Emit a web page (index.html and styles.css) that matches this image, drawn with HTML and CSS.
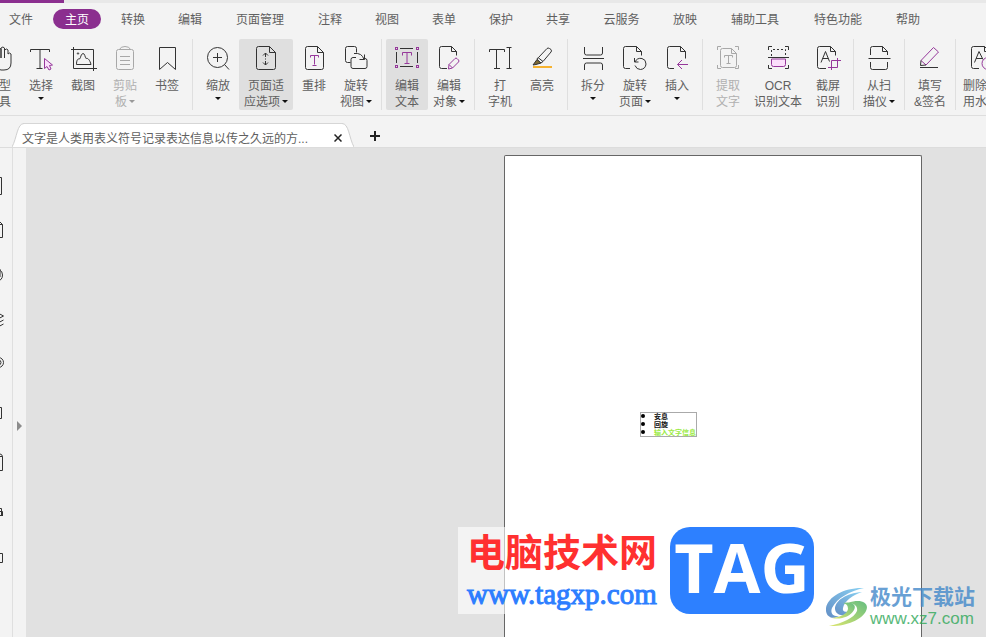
FILE: index.html
```html
<!DOCTYPE html>
<html lang="zh-CN">
<head>
<meta charset="utf-8">
<meta name="viewport" content="width=device-width, initial-scale=1">
<title>PDF 编辑器</title>
<link rel="stylesheet" href="styles.css">
</head>
<body>
<div class="app">
  <header class="top">
    <div class="strip"></div>
    <nav class="menu">
      <button class="file">文件</button>
      <button class="current">主页</button>
      <div class="menu-items">
        <button>转换</button>
        <button>编辑</button>
        <button class="long">页面管理</button>
        <button>注释</button>
        <button>视图</button>
        <button>表单</button>
        <button>保护</button>
        <button>共享</button>
        <button class="mid">云服务</button>
        <button>放映</button>
        <button class="long">辅助工具</button>
        <button class="long">特色功能</button>
        <button>帮助</button>
      </div>
    </nav>

    <div class="ribbon">
      <button class="tool">
        <svg viewBox="0 0 28 28"><path d="M9 13V7q2.500-2 3.500 0v7V5q2-2 3.500 0v9V4q2-2 3.500 0v10V6q2.500-2 3.500 0v4q1.500-2 3 0v9q0 7-7 7h-3q-3 0-5-4l-4-7q1-2 3-1z"/></svg>
        <span>手型<br>工具</span>
      </button>
      <button class="tool">
        <svg viewBox="0 0 28 28"><path d="M3.500 8V5.500h19V8M13 5.500v19M9.500 24.500h6"/><path class="p pink" d="M17.500 14.500v10l2.500-2 2 3.500 2-1-1.500-3.500 3-.5z"/></svg>
        <span>选择<i class="caret below"></i></span>
      </button>
      <button class="tool">
        <svg viewBox="0 0 28 28"><path d="M4.500 3v21.500H28M2 5.500h22.500V27M7.500 20.500c0-4 1-6 3-5.500 1.500-1 1-5 3.500-5.500 2 0 2 4 3 5 2-1 4 2 5 6z"/><circle cx="9" cy="9.500" r=".7"/></svg>
        <span>截图</span>
      </button>
      <button class="tool" disabled>
        <svg viewBox="0 0 28 28"><rect x="5.500" y="5.500" width="17" height="20" rx="2"/><path d="M8.500 5.500q1-3 5.500-3t5.500 3M9 12.500h10M9 16.500h10M9 20.500h10"/></svg>
        <span>剪贴<br>板<i class="caret"></i></span>
      </button>
      <button class="tool">
        <svg viewBox="0 0 28 28"><path d="M6.500 3.500h16v22l-8-7-8 7z"/></svg>
        <span>书签</span>
      </button>
      <hr>
      <button class="tool">
        <svg viewBox="0 0 28 28"><circle cx="13.500" cy="13.500" r="10"/><path d="M20.500 20.500l4.500 5M9 13.500h9M13.500 9v9"/></svg>
        <span>缩放<i class="caret below"></i></span>
      </button>
      <button class="tool active wide">
        <svg viewBox="0 0 28 28"><path d="M17.500 2.500h-11q-2 0-2 2v19q0 2 2 2h15q2 0 2-2v-15zv6h6M13.500 9v4M13.500 17v4M11 11.500l2.500-2.500 2.500 2.500M11 18.500l2.500 2.500 2.500-2.500M13.500 14.500v1"/></svg>
        <span>页面适<br>应选项<i class="caret"></i></span>
      </button>
      <button class="tool">
        <svg viewBox="0 0 28 28"><path d="M17.500 2.500h-10q-2 0-2 2v19q0 2 2 2h14q2 0 2-2v-15zv6h6"/><path class="p" d="M10.500 13.500v-2h8v2M14.500 11.500v9M12.500 21.500h4"/></svg>
        <span>重排</span>
      </button>
      <button class="tool">
        <svg viewBox="0 0 28 28"><path d="M8.500 18.500h-3q-2 0-2-2v-12q0-2 2-2h7q2 0 2 2v4M14 13.500h-3q-2 0-2 2v7q0 2 2 2h12q2 0 2-2v-6q0-2-2-2M12 9.500q8-1 10 6M22.500 10.500v5h-5"/></svg>
        <span>旋转<br>视图<i class="caret"></i></span>
      </button>
      <hr>
      <button class="tool active">
        <svg viewBox="0 0 28 28"><path d="M7 4.500h13M7 22.500h13M3.500 8v11M24.500 8v11"/><g class="p"><path d="M9.500 11.500v-3h9v3M14 8.500v11M11.500 19.500h5"/><rect x="2.500" y="3.500" width="2" height="2"/><rect x="23.500" y="3.500" width="2" height="2"/><rect x="2.500" y="21.500" width="2" height="2"/><rect x="23.500" y="21.500" width="2" height="2"/></g></svg>
        <span>编辑<br>文本</span>
      </button>
      <button class="tool">
        <svg viewBox="0 0 28 28"><path d="M12 24.500H6.500q-2 0-2-2v-18q0-2 2-2h10l5 5v4M16.500 2.500v5h5"/><path class="p" d="M14 20.500l6-6q1-1 2 0l1.500 1.500q1 1 0 2l-6 6-4 1zM14 20.500l3.500 3.500"/></svg>
        <span>编辑<br>对象<i class="caret"></i></span>
      </button>
      <hr>
      <button class="tool">
        <svg viewBox="0 0 28 28"><path d="M3.500 8V5.500h15V8M10.500 5.500v19M8 24.500h6M20.500 3.500h5M23.500 3.500v21M20.500 24.500h5"/></svg>
        <span>打<br>字机</span>
      </button>
      <button class="tool">
        <svg viewBox="0 0 28 28"><path d="M10.500 13.500l8.500-9q1-1 2.500 0l1.500 1q1 1.500 0 2.500l-8 9.500M10 13.500l5 4-2 1.500q-2-.5-4-4z"/><path class="nib" d="M9 15.500l4 3.500-5 1.500-3 .5z"/><path class="orange" d="M5 23h19"/></svg>
        <span>高亮</span>
      </button>
      <hr>
      <button class="tool">
        <svg viewBox="0 0 28 28"><path d="M5.500 3v6q0 2 2 2h14q2 0 2-2V3M4 14.500h21M5.500 26v-5q0-2 2-2h14q2 0 2 2v5"/></svg>
        <span>拆分<i class="caret below"></i></span>
      </button>
      <button class="tool">
        <svg viewBox="0 0 28 28"><path d="M9 24.500H4.500q-2 0-2-2v-18q0-2 2-2h11l5 5v4M15.500 2.500v5h5M13.500 14v4h4M14 18q2-4.500 7-3.500 4 1 4 5.500-.5 5-5.500 5.500-4 0-5.500-4"/></svg>
        <span>旋转<br>页面<i class="caret"></i></span>
      </button>
      <button class="tool">
        <svg viewBox="0 0 28 28"><path d="M11 24.500H6.500q-2 0-2-2v-18q0-2 2-2h11l5 5v7M17.500 2.500v5h5"/><path class="p" d="M25 20.500H14.500M19 16l-4.500 4.500L19 25"/></svg>
        <span>插入<i class="caret below"></i></span>
      </button>
      <hr>
      <button class="tool" disabled>
        <svg viewBox="0 0 28 28"><path d="M3.500 6V2.500H7M21 2.500h3.500V6M3.500 21v3.500H7M21 24.500h3.500V21M17.500 4.500h-9q-2 0-2 2v15q0 2 2 2h12q2 0 2-2v-12zv5h5M10.500 13.500v-2h8v2M14.500 11.500v8M12.500 19.500h4"/></svg>
        <span>提取<br>文字</span>
      </button>
      <button class="tool ocr">
        <svg viewBox="0 0 28 28"><path d="M4.500 6V2.500H8M21 2.500h3.500V6M4.500 21v3.500H8M21 24.500h3.500V21"/><path stroke-dasharray="2 2" d="M7.500 12V5.500h14V12"/><path class="p pink" d="M7.500 15v5.500q0 2 2 2h10q2 0 2-2V15z"/><path d="M4 13.500h21"/></svg>
        <span>OCR<br>识别文本</span>
      </button>
      <button class="tool">
        <svg viewBox="0 0 28 28"><path d="M12 24.500H5.500q-2 0-2-2v-18q0-2 2-2h11l5 5v4M16.500 2.500v5h5M7 18.500l4.500-11 4 10M8.500 14.500h6"/><path class="p" d="M14 23.500h9.500V14M17.500 26v-9.500H27"/></svg>
        <span>截屏<br>识别</span>
      </button>
      <hr>
      <button class="tool">
        <svg viewBox="0 0 28 28"><path d="M5.500 11V4.500q0-2 2-2h10l5 5V11M17.500 2.500v5h5M3.500 14.500h22M5.500 18v5.500q0 2 2 2h13q2 0 2-2V18"/></svg>
        <span>从扫<br>描仪<i class="caret"></i></span>
      </button>
      <hr>
      <button class="tool">
        <svg viewBox="0 0 28 28"><path class="p" d="M5 16.500L17.500 3.500l5 4.500-12.500 13z"/><path d="M5 16.500l-.5 5 5.500-.5M4 23.500h18"/></svg>
        <span>填写<br>&amp;签名</span>
      </button>
      <hr>
      <button class="tool">
        <svg viewBox="0 0 28 28"><path d="M12 24.500H6.500q-2 0-2-2v-18q0-2 2-2h11l5 5v5M17.500 2.500v5h5M7.500 18.500l4.500-11 4 8M9 14.500h6"/><circle class="p" cx="21" cy="19.500" r="6"/></svg>
        <span>删除试<br>用水印</span>
      </button>
    </div>
  </header>

  <div class="tabs">
    <div class="tab">
      <svg class="edge" viewBox="0 0 12 24"><path d="M0 24C5 15 5 .5 12 .5V24z"/><path class="line" d="M0 24C5 15 5 .5 12 .5"/></svg>
      <a href="#doc">文字是人类用表义符号记录表达信息以传之久远的方...</a>
      <button class="close" aria-label="关闭"><svg viewBox="0 0 8 8"><path d="M.5.5l7 7M7.500.5l-7 7"/></svg></button>
      <svg class="edge flip" viewBox="0 0 12 24"><path d="M0 24C5 15 5 .5 12 .5V24z"/><path class="line" d="M0 24C5 15 5 .5 12 .5"/></svg>
    </div>
    <button class="add" aria-label="新建标签"><svg viewBox="0 0 10 10"><path d="M0 5h10M5 0v10"/></svg></button>
  </div>

  <main class="work">
    <aside class="rail">
      <button aria-label="缩略图"><svg viewBox="0 0 24 24"><path d="M6 3.500h15.500v17H6z"/></svg></button>
      <button aria-label="书签"><svg viewBox="0 0 24 24"><path d="M6 6.500h16.500v13H6zM18 6l2-2 2.500 2.500"/></svg></button>
      <button aria-label="附件"><svg viewBox="0 0 24 24"><path d="M10 8v6q0 5 6 5 6.500 0 6.500-6 0-4-3-5M20 7v8"/></svg></button>
      <button aria-label="图层"><svg viewBox="0 0 24 24"><path d="M16 6l7.500 4-7.500 4-8-4zM23.500 14l-7.500 4-8-4M23.500 18l-7.500 4-8-4"/></svg></button>
      <button aria-label="标记"><svg viewBox="0 0 24 24"><circle cx="18.500" cy="12.500" r="5"/><circle cx="18.500" cy="12.500" r="2.500"/></svg></button>
      <button class="second" aria-label="字段"><svg viewBox="0 0 24 24"><path d="M6 6.500h15.500v11H6z"/></svg></button>
      <button class="lower" aria-label="剪贴板"><svg viewBox="0 0 24 24"><path d="M6 7.500h16.500v14H6zM18 7q0-2 2-2t2.500 2.500"/></svg></button>
      <button class="lower" aria-label="安全"><svg viewBox="0 0 24 24"><path d="M17 11.500h4.500v7H17M22.500 19v-4.500H19M17 18.500h5.500M19.500 4v3"/></svg></button>
      <button class="lower" aria-label="签名"><svg viewBox="0 0 24 24"><path d="M6 8.500h16.500v9H6z"/></svg></button>
    </aside>
    <button class="expand" aria-label="展开面板"></button>
    <section class="canvas">
      <article class="page" id="doc">
        <ul class="textbox">
          <li>安息</li>
          <li>回旋</li>
          <li class="green">输入文字信息</li>
        </ul>
      </article>
    </section>
  </main>

  <div class="banner">
    <div class="banner-text">
      <strong>电脑技术网</strong>
      <span>www.tagxp.com</span>
    </div>
    <div class="tag">TAG</div>
  </div>

  <div class="stamp">
    <svg viewBox="0 0 42 40">
      <defs>
        <linearGradient id="blue" x1="1" y1="0" x2="0" y2="1"><stop offset="0" stop-color="#6dc6f0"/><stop offset="1" stop-color="#3d74b8"/></linearGradient>
        <linearGradient id="green" x1="1" y1="0" x2="0" y2="1"><stop offset="0" stop-color="#3fae62"/><stop offset="1" stop-color="#d5e04a"/></linearGradient>
      </defs>
      <path fill="url(#blue)" d="M38 1C20 0 2 9 0 21c-1 9 7 12 13 8-6 1-9-3-7-8C11 11 24 4 38 1z"/>
      <path fill="url(#blue)" d="M36 5C20 6 9 14 9 22c1 8 12 8 16 1-5 3-9 2-8-2 1-7 10-13 19-16z"/>
      <path fill="url(#green)" d="M22 16c13-5 22 0 18 8C36 33 18 40 3 39c14-3 25-8 28-15 1-5-3-8-9-8z"/>
      <path fill="url(#green)" d="M17 16c9-2 14 2 11 7-4 7-14 10-22 8 9-1 15-4 16-9 0-3-1-5-5-6z"/>
    </svg>
    <div class="stamp-text">
      <strong>极光下载站</strong>
      <span>www.xz7.com</span>
    </div>
  </div>
</div>
</body>
</html>
```
FILE: styles.css
```css
* {
  box-sizing: border-box;
}

body {
  margin: 0;
  background: #f3f3f3;
  color: #606060;
  font: 12px/16px "Liberation Sans", "Noto Sans CJK SC", sans-serif;
  overflow: hidden;
}

button {
  margin: 0;
  padding: 0;
  border: 0;
  background: none;
  color: inherit;
  font: inherit;
  white-space: nowrap;
}

svg {
  display: block;
  flex: none;
  fill: none;
  stroke: #333;
}

.app {
  position: relative;
  display: flex;
  flex-direction: column;
  height: 100vh;
  overflow: hidden;
}

.top {
  border-bottom: 1px solid #dedede;
}

.strip {
  height: 3px;
  background: linear-gradient(#8b2f8f, #8b2f8f) left / 64px 100% no-repeat #e8e8e8;
}

/* Menu */
.menu {
  display: flex;
  align-items: center;
  gap: 20px;
  height: 32px;
  padding-left: 9px;
}

.menu button {
  height: 20px;
  padding-top: 2px;
}

.menu .current {
  width: 48px;
  border-radius: 10px;
  background: #8b2f8f;
  color: #fff;
}

.menu-items {
  display: flex;
  gap: 33px;
}

.menu-items button {
  width: 24px;
}

.menu-items .mid {
  width: 37px;
}

.menu-items .long {
  width: 50px;
}

/* Ribbon */
.ribbon {
  display: flex;
  height: 80px;
  padding: 4px 0 5px;
  margin-left: -22px;
}

.ribbon hr {
  flex: none;
  width: 1px;
  height: 71px;
  margin: 0 4px;
  border: 0;
  background: #dfdfdf;
}

.tool {
  display: flex;
  flex: none;
  flex-direction: column;
  align-items: center;
  gap: 6px;
  width: 42px;
  height: 71px;
  padding-top: 5px;
  border-radius: 2px;
}

.tool svg {
  width: 28px;
  height: 28px;
}

.tool.wide {
  width: 54px;
}

.tool.ocr {
  width: 58px;
}

.tool.active {
  background: #dfdfdf;
}

.tool:disabled {
  color: #b0b0b0;
}

.tool:disabled svg {
  stroke: #a8a8a8;
}

.tool .p {
  stroke: #96389b;
}

.pink {
  fill: #fbdffb;
}

.nib {
  fill: #7d6a35;
}

.orange {
  stroke: #f6b22f;
  stroke-width: 2;
}

.caret {
  display: inline-block;
  margin-left: 2px;
  border: 3px solid transparent;
  border-top-color: #111;
  border-bottom: 0;
  vertical-align: 3px;
}

.caret.below {
  display: block;
  width: 6px;
  margin: 3px auto 0;
}

.tool:disabled .caret {
  border-top-color: #999;
}

/* Document tabs */
.tabs {
  display: flex;
  align-items: flex-end;
  height: 32px;
  padding-left: 12px;
  border-bottom: 1px solid #dcdcdc;
}

.tab {
  display: flex;
  height: 24px;
}

.edge {
  width: 12px;
  height: 24px;
  fill: #fff;
  stroke: none;
}

.edge .line {
  fill: none;
  stroke: #cfcfcf;
}

.flip {
  transform: scaleX(-1);
}

.tab a {
  padding: 7px 0 0;
  width: 308px;
  border-top: 1px solid #d6d6d6;
  background: #fff;
  color: #606060;
  text-decoration: none;
  white-space: nowrap;
  text-indent: -2px;
}

.close {
  width: 10px;
  padding: 4px 0 0 2px;
  border-top: 1px solid #d6d6d6;
  background: #fff;
}

.close svg {
  width: 8px;
  height: 8px;
  stroke: #222;
  stroke-width: 1.5;
}

.add {
  width: 42px;
  height: 22px;
}

.add svg {
  width: 10px;
  height: 10px;
  margin: 0 auto;
  stroke: #222;
  stroke-width: 2;
}

/* Work area */
.work {
  display: grid;
  grid-template-columns: 13px 13px 1fr;
  flex: 1;
  min-height: 0;
}

.rail {
  display: flex;
  flex-direction: column;
  padding-top: 16px;
  border-right: 1px solid #dfdfdf;
}

.rail button {
  display: flex;
  align-items: center;
  flex: none;
  width: 24px;
  height: 44px;
  margin-left: -20px;
}

.rail .second,
.rail .lower {
  height: 48px;
}

.rail .second {
  margin-top: 5px;
}

.rail svg {
  width: 24px;
  height: 24px;
}

.expand {
  padding-top: 66px;
}

.expand::before {
  content: "";
  display: block;
  width: 0;
  margin-left: 4px;
  border: 5px solid transparent;
  border-left-color: #8c8c8c;
  border-right: 0;
}

.canvas {
  display: flex;
  justify-content: flex-end;
  padding: 7px 64px 0 0;
  background: #e1e1e1;
}

.page {
  position: relative;
  width: 418px;
  border: 1px solid #666;
  border-bottom: 0;
  border-radius: 2px 2px 0 0;
  background: #fff;
}

.textbox {
  position: absolute;
  left: 135px;
  top: 256px;
  display: flex;
  flex-direction: column;
  justify-content: space-between;
  width: 57px;
  height: 25px;
  margin: 0;
  padding: 0 0 1px 13px;
  border: 1px solid #aaa;
  color: #111;
  font: bold 7px/6px "Noto Sans CJK SC", sans-serif;
  list-style: none;
  white-space: nowrap;
}

.textbox li::before {
  content: "";
  float: left;
  width: 4px;
  height: 4px;
  margin: 1px 0 0 -13px;
  border-radius: 2px;
  background: #000;
}

.textbox .green {
  color: #9bea45;
}

/* Overlaid marks */
.banner {
  position: absolute;
  right: 172px;
  bottom: 23px;
  display: flex;
  gap: 2px;
  background: rgb(255 255 255 / 60%);
}

.banner-text {
  display: flex;
  flex-direction: column;
  width: 210px;
  height: 87px;
  padding-left: 9px;
}

.banner-text strong {
  color: #ff3030;
  font: bold 38px/46px "Noto Sans CJK SC", sans-serif;
}

.banner-text span {
  color: #2d7eff;
  font: 29px/42px "Liberation Serif", serif;
  -webkit-text-stroke: 1px #2d7eff;
}

.tag {
  width: 144px;
  height: 87px;
  border-radius: 20px;
  background: #2d80ff;
  color: #fff;
  font: bold 68px/80px "Open Sans", sans-serif;
  text-align: center;
}

.stamp {
  position: absolute;
  right: 11px;
  bottom: 6px;
  display: flex;
  gap: 2px;
  opacity: 0.8;
}

.stamp svg {
  width: 42px;
  height: 40px;
  margin-top: 2px;
  stroke: none;
}

.stamp-text {
  display: flex;
  flex-direction: column;
}

.stamp-text strong {
  color: #4389ca;
  font: bold 21px/20px "Noto Sans CJK SC", sans-serif;
}

.stamp-text span {
  padding-top: 2px;
  color: #2fa858;
  font: 17px/24px "Liberation Sans", sans-serif;
}
```
